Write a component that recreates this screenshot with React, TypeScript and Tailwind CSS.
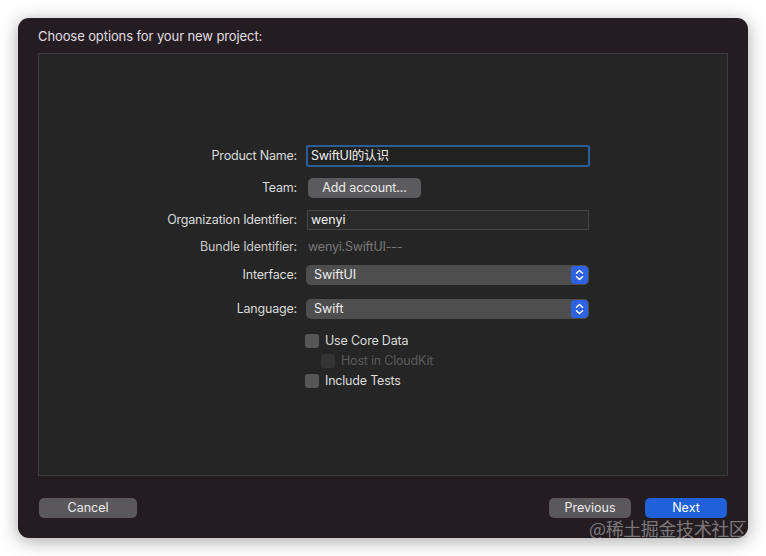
import React from "react";

const font = { fontFamily: 'Inter, "Noto Sans CJK SC", sans-serif' };

function Stepper() {
  return (
    <div className="w-[17px] h-[18px] rounded-[4px] bg-[#2d62e0] flex items-center justify-center">
      <svg width="9" height="12" viewBox="0 0 9 12" fill="none" stroke="white" strokeWidth="1.5" strokeLinecap="round" strokeLinejoin="round">
        <path d="M1.5 4.2 L4.5 1.5 L7.5 4.2" />
        <path d="M1.5 7.8 L4.5 10.5 L7.5 7.8" />
      </svg>
    </div>
  );
}

function Row({ label, mt, h, children, muted }: { label?: string; mt: string; h: string; children: React.ReactNode; muted?: boolean }) {
  return (
    <div className={`flex items-center ${mt} ${h}`}>
      <div className={`w-[258px] shrink-0 text-right text-[12.5px] tracking-[-0.2px] ${muted ? "text-[#c9c9c9]" : "text-[#dcdcdc]"}`}>{label}</div>
      <div className="ml-[9px] flex items-center h-full">{children}</div>
    </div>
  );
}

function Checkbox({ label, disabled }: { label: string; disabled?: boolean }) {
  return (
    <div className="flex items-center gap-[6px] h-[14px]">
      <div className={`w-[14px] h-[14px] rounded-[3px] ${disabled ? "bg-[#333333]" : "bg-[#565656]"}`} />
      <span className={`text-[12.5px] leading-[14px] tracking-[-0.2px] ${disabled ? "text-[#5b5b5b]" : "text-[#dcdcdc]"}`}>{label}</span>
    </div>
  );
}

export default function App() {
  return (
    <div className="w-[766px] h-[556px] bg-white relative overflow-hidden" style={font}>
      <div className="absolute left-[18px] top-[18px] w-[730px] h-[520px] rounded-[11px] bg-[#231d21] shadow-[0_3px_18px_rgba(0,0,0,0.35)] flex flex-col">
        <div className="h-[35px] pl-[20px] flex items-center text-[13px] tracking-[-0.1px] text-[#e2dde0] pt-[2px]">
          Choose options for your new project:
        </div>
        <div className="mx-[20px] h-[423px] border border-[#3c3a3b] bg-[#252525] flex flex-col">
          <Row label="Product Name:" mt="mt-[91px]" h="h-[22px]">
            <div className="w-[284px] h-[22px] border-[2px] border-[#2b5d96] rounded-[2px] bg-[#222222] flex items-center pl-[3px] text-[12.5px] tracking-[-0.2px] text-[#f0f0f0]">
              SwiftUI的认识
            </div>
          </Row>
          <Row label="Team:" mt="mt-[11px]" h="h-[20px]">
            <div className="ml-[2px] w-[113px] h-[20px] rounded-[5px] bg-[#5b5a5c] flex items-center justify-center text-[12.5px] tracking-[-0.1px] text-[#ececec]">
              Add account...
            </div>
          </Row>
          <Row label="Organization Identifier:" mt="mt-[12px]" h="h-[20px]">
            <div className="ml-[1px] w-[282px] h-[20px] border border-[#454545] bg-[#2a2a2a] flex items-center pl-[3px] text-[12.5px] text-[#f0f0f0]">
              wenyi
            </div>
          </Row>
          <Row label="Bundle Identifier:" mt="mt-[8px]" h="h-[18px]" muted>
            <span className="ml-[2px] text-[12.5px] tracking-[-0.2px] text-[#797979]">wenyi.SwiftUI---</span>
          </Row>
          <Row label="Interface:" mt="mt-[9px]" h="h-[20px]">
            <div className="w-[283px] h-[20px] rounded-[5px] bg-[#4e4e4e] flex items-center justify-between pl-[8px] pr-[1px] text-[12.5px] text-[#efefef]">
              <span>SwiftUI</span>
              <Stepper />
            </div>
          </Row>
          <Row label="Language:" mt="mt-[14px]" h="h-[20px]">
            <div className="w-[283px] h-[20px] rounded-[5px] bg-[#4e4e4e] flex items-center justify-between pl-[8px] pr-[1px] text-[12.5px] text-[#efefef]">
              <span>Swift</span>
              <Stepper />
            </div>
          </Row>
          <div className="mt-[15px] ml-[266px] flex flex-col gap-[6px]">
            <Checkbox label="Use Core Data" />
            <div className="ml-[16px]">
              <Checkbox label="Host in CloudKit" disabled />
            </div>
            <Checkbox label="Include Tests" />
          </div>
        </div>
        <div className="mt-[22px] mx-[21px] flex items-center">
          <div className="w-[98px] h-[20px] rounded-[5px] bg-[#5b585c] flex items-center justify-center text-[12.5px] text-[#ececec]">
            Cancel
          </div>
          <div className="flex-1" />
          <div className="w-[82px] h-[20px] rounded-[5px] bg-[#5b585c] flex items-center justify-center text-[12.5px] text-[#ececec]">
            Previous
          </div>
          <div className="ml-[14px] w-[82px] h-[20px] rounded-[5px] bg-[#2060d8] flex items-center justify-center text-[12.5px] text-white">
            Next
          </div>
        </div>
      </div>
      <div className="absolute left-[589px] top-[517px] text-[18px] leading-[22px] text-[rgba(200,200,200,0.55)] tracking-[-0.4px]" style={{ fontFamily: '"Noto Sans CJK SC", sans-serif' }}>
        @稀土掘金技术社区
      </div>
    </div>
  );
}
